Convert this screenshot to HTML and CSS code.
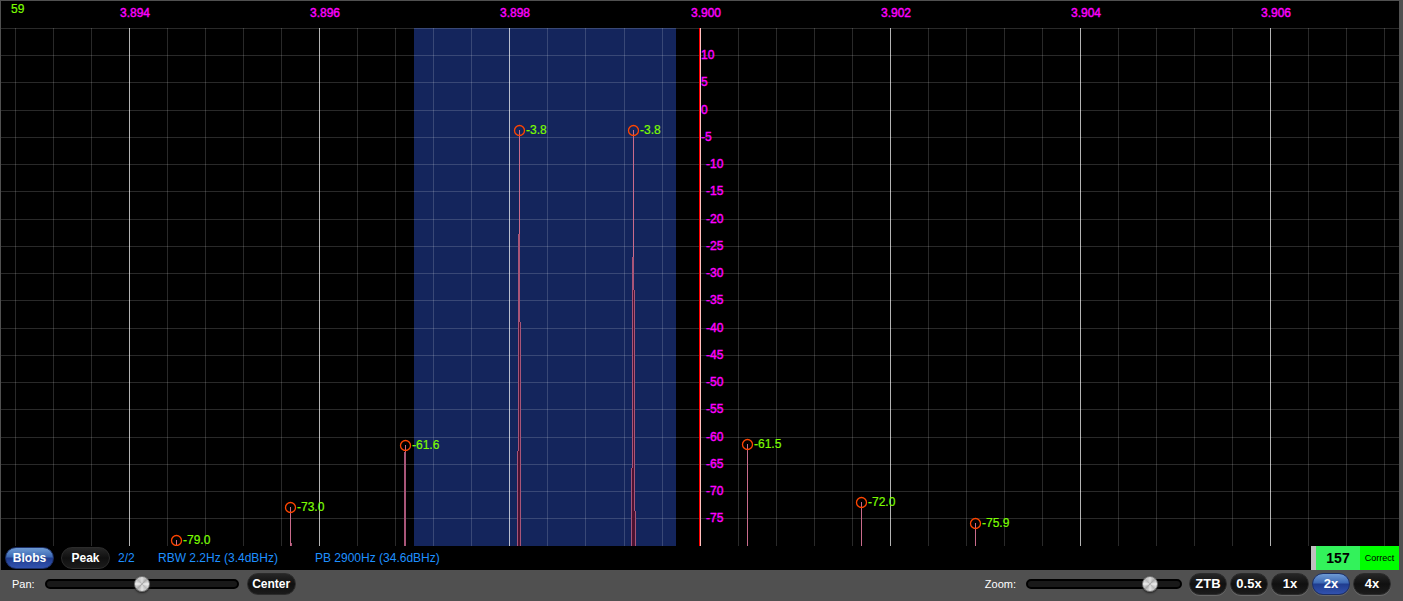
FILE: index.html
```html
<!DOCTYPE html>
<html lang="en">
<head>
    <meta charset="UTF-8">
    <meta name="viewport" content="width=device-width, initial-scale=1.0">
    <title>Spectrum Display</title>
    <link rel="stylesheet" href="styles.css">
</head>
<body>
    <main class="panel">
        <svg class="spectrum" viewBox="1 1 1398 545" role="img" aria-label="Spectrum in MHz and dB">
            <rect class="passband" x="414" y="28" width="262" height="518"/>
            <g id="grid"></g>
            <rect class="carrier" x="699" y="28" width="1" height="518"/>
            <rect class="carrier-light" x="700" y="28" width="1" height="518"/>
            <g id="stems"></g>
            <g id="axis" class="axis"></g>
            <g id="peaks" class="peaks"></g>
            <text class="level" x="11" y="13">59</text>
        </svg>

        <div class="status-bar">
            <button type="button" class="pill wide active">Blobs</button>
            <button type="button" class="pill wide">Peak</button>
            <span class="count">2/2</span>
            <span class="rbw">RBW 2.2Hz (3.4dBHz)</span>
            <span>PB 2900Hz (34.6dBHz)</span>
            <div class="badge">
                <strong class="badge-value">157</strong>
                <span class="badge-label">Correct</span>
            </div>
        </div>
    </main>

    <div class="toolbar">
        <label for="pan">Pan:</label>
        <input type="range" id="pan" class="pan" min="0" max="100" value="50">
        <button type="button" class="pill wide">Center</button>

        <div class="zoom-group">
            <label for="zoom">Zoom:</label>
            <input type="range" id="zoom" class="zoom" min="0" max="100" value="84">
            <div class="zoom-buttons">
                <button type="button" class="pill">ZTB</button>
                <button type="button" class="pill">0.5x</button>
                <button type="button" class="pill">1x</button>
                <button type="button" class="pill active">2x</button>
                <button type="button" class="pill">4x</button>
            </div>
        </div>
    </div>

    <script src="spectrum.js"></script>
</body>
</html>
```
FILE: styles.css
```css
/* Reset margin and padding */
* {
    margin: 0;
    padding: 0;
    box-sizing: border-box;
}

body {
    font-family: "Liberation Sans", Arial, sans-serif;
    font-size: 12px;
    background-color: #505050;
    color: #fff;
    min-height: 100vh;
}

/* Black display area */
.panel {
    margin: 0 4px 0 0;
    border-top: 1px solid #505050;
    border-left: 1px solid #505050;
    background-color: #000;
}

.spectrum {
    display: block;
    width: 100%;
    height: auto;
}

.spectrum rect {
    shape-rendering: crispEdges;
}

.passband {
    fill: #14255c;
}

.line {
    fill: #fff;
    fill-opacity: 0.16;
}

.line.major {
    fill-opacity: 0.7;
}

.carrier {
    fill: #f00;
}

.carrier-light {
    fill: #ffc0c0;
}

.stem {
    fill: #c96b8b;
}

.stem-edge {
    fill: #a85578;
}

.stem-fill {
    fill: #4c1232;
}

.axis {
    fill: #f0f;
    stroke: #f0f;
    stroke-width: 0.4;
}

.peaks text, .level {
    fill: #7cfc00;
    stroke: #7cfc00;
    stroke-width: 0.2;
}

.peaks circle {
    fill: none;
    stroke: #ff4500;
    stroke-width: 1.3;
}

/* Status bar */
.status-bar {
    display: flex;
    align-items: center;
    height: 24px;
    padding-left: 4px;
    color: #1e90ff;
}

.status-bar .pill {
    margin-right: 7px;
}

.count {
    width: 40px;
    margin-left: 1px;
}

.rbw {
    width: 157px;
}

.badge {
    display: flex;
    align-self: stretch;
    margin-left: auto;
    border-left: 5px solid #c0c0c0;
    color: #000;
    line-height: 25px;
    text-align: center;
}

.badge-value {
    width: 44px;
    background-color: #33f25b;
    font-size: 14px;
}

.badge-label {
    width: 39px;
    background-color: #0f0;
    font-size: 9px;
}

/* Rounded buttons */
.pill {
    width: 38px;
    height: 22px;
    border: 1px solid #2c2c2c;
    border-radius: 11px;
    background: linear-gradient(#262626, #101010 50%, #1b1b1b);
    color: #fff;
    font-family: inherit;
    font-size: 13px;
    font-weight: bold;
    line-height: 18px;
    text-align: center;
    cursor: pointer;
}

.pill.wide {
    width: 49px;
    font-size: 12px;
}

.pill.active {
    border-color: #1c2f66;
    background: linear-gradient(#6e9bd4, #3c68b4 45%, #1f3c8e 50%, #3252ae);
}

/* Toolbar */
.toolbar {
    display: flex;
    align-items: center;
    height: 31px;
    padding: 0 12px 3px;
    font-size: 11px;
}

.toolbar label {
    margin-right: 10px;
}

input[type="range"] {
    appearance: none;
    height: 16px;
    background: transparent;
}

input[type="range"]::-webkit-slider-runnable-track {
    height: 10px;
    border: 2px solid #000;
    border-radius: 5px;
    background-color: #191919;
}

input[type="range"]::-webkit-slider-thumb {
    appearance: none;
    width: 16px;
    height: 16px;
    margin-top: -5px;
    border: 1px solid #777;
    border-radius: 50%;
    background: conic-gradient(#ddd, #aaa, #eee, #bbb, #e4e4e4, #a8a8a8, #eee, #bbb, #ddd);
    box-shadow: 0 1px 2px #222;
}

.pan {
    width: 194px;
    margin-right: 8px;
}

.zoom {
    width: 156px;
    margin-right: 7px;
}

.zoom-group {
    display: flex;
    align-items: center;
    margin-left: auto;
}

.zoom-buttons {
    display: flex;
    gap: 3px;
}

.zoom-buttons .pill {
    box-shadow: 0 1px 0 #686868;
}
```
FILE: spectrum.js
```js
const TOP = 28;
const BOTTOM = 546;
const grid = document.getElementById("grid");
const stems = document.getElementById("stems");
const axis = document.getElementById("axis");
const peaks = document.getElementById("peaks");

function add(parent, tag, attrs, text) {
    const el = document.createElementNS("http://www.w3.org/2000/svg", tag);
    for (const key in attrs) {
        el.setAttribute(key, attrs[key]);
    }
    if (text) {
        el.textContent = text;
    }
    parent.appendChild(el);
}

// Vertical lines, one major line every 2 kHz
for (let i = 0; i < 37; i++) {
    const x = Math.floor(15.39 + i * 38.04);
    const major = i % 5 === 3;
    add(grid, "rect", { class: major ? "line major" : "line", x: x, y: TOP, width: 1, height: BOTTOM - TOP });
    if (major) {
        add(axis, "text", { x: x - 9, y: 17 }, (3.894 + (i - 3) / 5 * 0.002).toFixed(3));
    }
}

// Horizontal lines, 5 dB apart
for (let i = 0; i < 19; i++) {
    const y = Math.round(TOP + i * 27.24);
    add(grid, "rect", { class: "line", x: 1, y: y, width: 1398, height: 1 });
    if (i > 0) {
        const db = 15 - i * 5;
        add(axis, "text", { x: db < -5 ? 706 : 701, y: y + 4 }, String(db));
    }
}

// Each stem part: class, x, top, width, bottom
const parts = [
    ["stem", 519, 130, 1, 234],
    ["stem-edge", 518, 234, 2, 322],
    ["stem-edge", 518, 322, 1, 451],
    ["stem-fill", 519, 322, 1, 546],
    ["stem-edge", 520, 322, 1, 546],
    ["stem-edge", 517, 451, 1, 546],
    ["stem-fill", 518, 451, 1, 546],
    ["stem", 633, 130, 1, 257],
    ["stem-edge", 632, 257, 2, 290],
    ["stem-edge", 632, 290, 1, 468],
    ["stem-fill", 633, 290, 1, 546],
    ["stem-edge", 634, 290, 1, 511],
    ["stem-edge", 631, 468, 1, 546],
    ["stem-fill", 632, 468, 1, 546],
    ["stem-fill", 634, 511, 1, 546],
    ["stem-edge", 635, 511, 1, 546],
    ["stem", 405, 445, 1, 452],
    ["stem-edge", 404, 452, 2, 546],
    ["stem", 290, 507, 1, 546],
    ["stem-edge", 291, 543, 1, 546],
    ["stem", 176, 540, 1, 546],
    ["stem", 747, 444, 1, 546],
    ["stem", 861, 502, 1, 546],
    ["stem", 975, 523, 1, 546]
];
parts.forEach(([cls, x, y, width, end]) => {
    add(stems, "rect", { class: cls, x: x, y: y, width: width, height: end - y });
});

const blobs = [
    [176, 540, "-79.0"],
    [290, 507, "-73.0"],
    [405, 445, "-61.6"],
    [519, 130, "-3.8"],
    [633, 130, "-3.8"],
    [747, 444, "-61.5"],
    [861, 502, "-72.0"],
    [975, 523, "-75.9"]
];
blobs.forEach(([x, y, label]) => {
    add(peaks, "circle", { cx: x + 0.5, cy: y + 0.5, r: 5 });
    add(peaks, "text", { x: x + 7, y: y + 4 }, label);
});
```
